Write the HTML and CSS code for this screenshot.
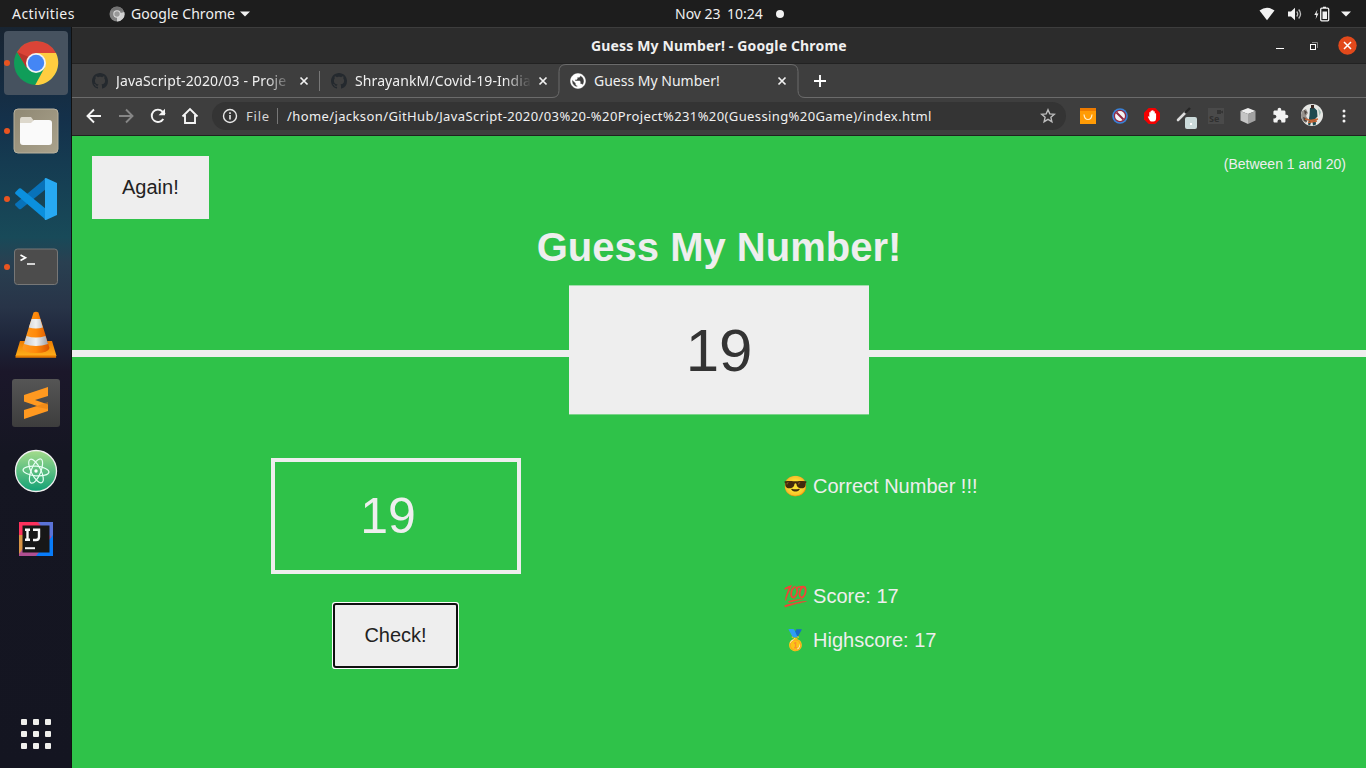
FILE: index.html
```html
<!DOCTYPE html>
<html lang="en">
<head>
<meta charset="utf-8">
<title>Guess My Number!</title>
<link rel="stylesheet" href="styles.css">
</head>
<body>
<svg class="defs" width="0" height="0">
  <defs>
    <symbol id="github" viewBox="0 0 16 16"><path fill="#24292e" d="M8 0C3.58 0 0 3.58 0 8c0 3.54 2.29 6.53 5.47 7.59.4.07.55-.17.55-.38 0-.19-.01-.82-.01-1.49-2.01.37-2.53-.49-2.69-.94-.09-.23-.48-.94-.82-1.13-.28-.15-.68-.52-.01-.53.63-.01 1.08.58 1.23.82.72 1.21 1.87.87 2.33.66.07-.52.28-.87.51-1.07-1.78-.2-3.64-.89-3.64-3.95 0-.87.31-1.59.82-2.15-.08-.2-.36-1.02.08-2.12 0 0 .67-.21 2.2.82.64-.18 1.32-.27 2-.27s1.36.09 2 .27c1.53-1.04 2.2-.82 2.2-.82.44 1.1.16 1.92.08 2.12.51.56.82 1.27.82 2.15 0 3.07-1.87 3.75-3.65 3.95.29.25.54.73.54 1.48 0 1.07-.01 1.93-.01 2.2 0 .21.15.46.55.38A8.01 8.01 0 0 0 16 8c0-4.42-3.58-8-8-8z"/></symbol>
    <symbol id="close" viewBox="0 0 10 10"><path d="M1.500 1.500l7 7M8.500 1.500l-7 7" stroke="#f1f1f1" stroke-width="1.700" fill="none"/></symbol>
    <linearGradient id="cone" x1="0" x2="1"><stop offset="0" stop-color="#ff9a20"/><stop offset=".5" stop-color="#ff8a0a"/><stop offset="1" stop-color="#d95400"/></linearGradient>
    <linearGradient id="coneWhite" x1="0" x2="1"><stop offset="0" stop-color="#c5c8cc"/><stop offset=".5" stop-color="#f0f0f0"/><stop offset="1" stop-color="#a0a3a8"/></linearGradient>
    <linearGradient id="coneBase" x1="0" x2="0" y1="0" y2="1"><stop offset="0" stop-color="#ee7c00"/><stop offset="1" stop-color="#ffb01c"/></linearGradient>
    <linearGradient id="atomFill" x1="0" x2="0" y1="0" y2="1"><stop offset="0" stop-color="#a5dc8c"/><stop offset="1" stop-color="#12a176"/></linearGradient>
    <linearGradient id="sublimeTile" x1="0" x2="0" y1="0" y2="1"><stop offset="0" stop-color="#555"/><stop offset="1" stop-color="#3d3d3d"/></linearGradient>
    <linearGradient id="folderTile" x1="0" x2="1" y1="0" y2="1"><stop offset="0" stop-color="#8f8873"/><stop offset="1" stop-color="#aaa28c"/></linearGradient>
  </defs>
</svg>
<div class="desktop">
  <div class="panel">
    <div class="panel-side">
      <span class="t-activities">Activities</span>
      <svg class="app-icon" width="16" height="16" viewBox="0 0 16 16"><circle cx="8" cy="8" r="7.500" fill="#828282"/><path d="M8 8L15.300 6A7.500 7.500 0 0 1 8 15.500z" fill="#d2d2d2"/><path d="M1.500 4.500A7.500 7.500 0 0 1 14.500 4.500H8z" fill="#727272"/><circle cx="8" cy="8" r="3.700" fill="#ddd"/><circle cx="8" cy="8" r="2.700" fill="#999"/></svg>
      <span class="t-app">Google Chrome</span>
      <svg class="caret" width="10" height="6" viewBox="0 0 10 6"><path d="M0 .5h10L5 5.500z" fill="#f2f2f2"/></svg>
    </div>
    <div class="panel-clock"><span class="t-date">Nov 23</span><span class="t-time">10:24</span><i class="dot"></i></div>
    <div class="panel-status">
      <svg width="16" height="14" viewBox="0 0 16 14"><path d="M.5 3.500Q8-2 15.500 3.500L8 13.200z" fill="#f2f2f2"/></svg>
      <svg width="16" height="14" viewBox="0 0 16 14"><path d="M1 4.500h3L8 .8v12.400L4 9.500H1z" fill="#f2f2f2"/><path d="M9.700 4.500q2 2.500 0 5M11.700 2.500q3.700 4.500 0 9" stroke="#bbb" stroke-width="1.300" fill="none"/></svg>
      <svg width="16" height="16" viewBox="0 0 16 16"><path d="M3.500 3.500L.3 9h2L1.700 13 4.500 7.500h-2z" fill="#f2f2f2"/><path d="M9 2V.7h3V2" fill="#f2f2f2"/><rect x="6.700" y="2.200" width="8" height="12.600" rx="1" fill="none" stroke="#f2f2f2" stroke-width="1.300"/><rect x="8.500" y="5.500" width="4.500" height="7.500" fill="#f2f2f2"/></svg>
      <svg width="10" height="6" viewBox="0 0 10 6"><path d="M0 .5h10L5 5.500z" fill="#f2f2f2"/></svg>
    </div>
  </div>
  <div class="workspace">
    <nav class="dock">
      <div class="dock-item running active"><svg width="48" height="48" viewBox="0 0 48 48"><circle cx="24" cy="24" r="22" fill="#109d59"/><path d="M5 13A22.300 22.300 0 0 1 44 14H24L14.500 28z" fill="#db4437"/><path d="M24 14h20A22.300 22.300 0 0 1 23.200 46L33 28z" fill="#ffcd40"/><path d="M5.500 13l9 16 2-11z" fill="#b9342b"/><circle cx="24" cy="24" r="10" fill="#f3f3f3"/><circle cx="24" cy="24" r="8.200" fill="#4486f5"/></svg></div>
      <div class="dock-item running"><svg width="48" height="48" viewBox="0 0 48 48"><rect x="2" y="2" width="44" height="44" rx="4" fill="url(#folderTile)" stroke="#b8b19e" stroke-width="1"/><path d="M8 13q0-3 2-3h9l3 4h15v5H8z" fill="#ddd8cc"/><path d="M8 16h11l3-3h15q3 0 3 3v19q0 3-3 3H11q-3 0-3-3z" fill="#fafafa"/></svg></div>
      <div class="dock-item running"><svg width="48" height="48" viewBox="0 0 48 48"><path d="M34 3v11L9 34q-1 .6-2 0l-3.500-3.500q-1-1 0-2z" fill="#0872b9"/><path d="M3.500 17L7 13.600q1-.6 2 0L34 34v11L3.500 19q-1-1 0-2z" fill="#0b90de"/><path d="M34 3l11 5v32l-11 5q-2 0-1-2V5q-1-2 1-2z" fill="#27a9f3"/></svg></div>
      <div class="dock-item running"><svg width="48" height="48" viewBox="0 0 48 48"><rect x="2.500" y="6" width="43" height="35.500" rx="3" fill="#4c4c4c" stroke="#777"/><path d="M8.500 12l5 2.800-5 2.800" stroke="#fff" stroke-width="1.700" fill="none"/><path d="M15 21h8" stroke="#fff" stroke-width="1.500"/></svg></div>
      <div class="dock-item"><svg width="48" height="48" viewBox="0 0 48 48"><path d="M8 30h32l4.500 15H3.500z" fill="url(#coneBase)"/><path d="M3.500 44.500h40.600v2.200H3.500z" fill="#e47b00"/><path d="M21.500 1.500Q24 0 26.500 1.500L37.500 37q-1 5-13.500 5T10.500 37z" fill="url(#cone)"/><path d="M19.600 8h8.700l2.500 8.500q-7 2-14 0zM14.500 25q9.500 3 19 0l2.500 8q-12 4-24 0z" fill="url(#coneWhite)"/></svg></div>
      <div class="dock-item"><svg width="48" height="48" viewBox="0 0 48 48"><rect width="48" height="48" rx="3" fill="url(#sublimeTile)"/><path d="M12 16l24-8v9l-13 4 13 4.500V32l-24 8v-9l13-4-13-4.500z" fill="#ff9920"/><path d="M23 27.500l13-4.500V29l-1 1z" fill="#e27d10" opacity=".5"/></svg></div>
      <div class="dock-item"><svg width="48" height="48" viewBox="0 0 48 48"><circle cx="24" cy="24" r="20.500" fill="url(#atomFill)" stroke="#f0f0f0" stroke-width="1.300"/><g fill="none" stroke="#e7fff4" stroke-width="1.200"><ellipse cx="24" cy="24" rx="13" ry="4.800" transform="rotate(5 24 24)"/><ellipse cx="24" cy="24" rx="13" ry="4.800" transform="rotate(63 24 24)"/><ellipse cx="24" cy="24" rx="13" ry="4.800" transform="rotate(112 24 24)"/></g><circle cx="24" cy="24" r="1.700" fill="#fff"/></svg></div>
      <div class="dock-item"><svg width="48" height="48" viewBox="0 0 48 48"><rect x="7" y="7" width="34" height="34" fill="#087cfa"/><path d="M7 7h20l14 14-12 20H7z" fill="#b04f92"/><path d="M7 7h18l6 7-20 8H7z" fill="#fe315d"/><path d="M27 7h14v16l-10-7z" fill="#5b73d8"/><path d="M7 20h5v12l-5 7z" fill="#d99445"/><path d="M41 20v21H24z" fill="#087cfa"/><rect x="10.500" y="10.500" width="27" height="27" fill="#171717"/><path d="M13 14.800h5M15.500 14v11M13 24.800h5M21 14.800h6V22q0 3-3 3h-3" fill="none" stroke="#f8f8f8" stroke-width="2.400"/><path d="M13 33.200h10" stroke="#f8f8f8" stroke-width="2"/></svg></div>
      <div class="apps"><i></i><i></i><i></i><i></i><i></i><i></i><i></i><i></i><i></i></div>
    </nav>
    <section class="window">
      <div class="titlebar">
        <span class="t-title">Guess My Number! - Google Chrome</span>
        <div class="controls"><i class="min"></i>
          <svg width="8" height="8" viewBox="0 0 8 8"><path d="M2 .5h5.500V6" fill="none" stroke="#888"/><rect x=".5" y="2.500" width="5" height="5" fill="none" stroke="#fff"/></svg>
          <svg width="19" height="19" viewBox="0 0 19 19"><circle cx="9.500" cy="9.500" r="9.200" fill="#e2491b"/><path d="M6 6l7 7M13 6l-7 7" stroke="#fff" stroke-width="1.500"/></svg></div>
      </div>
      <div class="tabs">
        <div class="tab one"><svg width="16" height="16"><use href="#github"/></svg><span class="label fade t-tab1">JavaScript-2020/03 - Proje</span><svg width="10" height="10"><use href="#close"/></svg></div>
        <div class="tab two"><svg width="16" height="16"><use href="#github"/></svg><span class="label fade t-tab2">ShrayankM/Covid-19-India</span><svg width="10" height="10"><use href="#close"/></svg></div>
        <div class="tab current"><svg class="edge" width="256" height="35" viewBox="0 0 256 35"><path d="M0 33.500h2q7 0 7-7v-19q0-7 7-7h225q7 0 7 7v19q0 7 7 7h1V35H0z" fill="#3e3e3e" stroke="none"/><path d="M0 33.500h2q7 0 7-7v-19q0-7 7-7h225q7 0 7 7v19q0 7 7 7h1" fill="none" stroke="#6b6b6b"/></svg>
          <svg width="18" height="18" viewBox="0 0 24 24"><path d="M12 2C6.480 2 2 6.480 2 12s4.480 10 10 10 10-4.480 10-10S17.520 2 12 2zm-1 17.930c-3.950-.49-7-3.850-7-7.930 0-.62.08-1.210.21-1.790L9 15v1c0 1.100.9 2 2 2v1.930zm6.900-2.540c-.26-.81-1-1.390-1.900-1.390h-1v-3c0-.55-.45-1-1-1H8v-2h2c.55 0 1-.45 1-1V7h2c1.100 0 2-.9 2-2v-.41c2.930 1.190 5 4.060 5 7.410 0 2.080-.8 3.970-2.100 5.390z" fill="#fff" stroke="#fff" stroke-width=".6"/></svg><span class="label t-tab3">Guess My Number!</span><svg width="10" height="10"><use href="#close"/></svg></div>
        <svg class="plus" width="12" height="12" viewBox="0 0 12 12"><path d="M6 0v12M0 6h12" stroke="#fff" stroke-width="1.900"/></svg>
      </div>
      <div class="toolbar">
        <svg class="nav" width="20" height="20" viewBox="0 0 20 20"><path d="M17 10H4M10 3.500L3.500 10l6.500 6.500" fill="none" stroke="#f5f5f5" stroke-width="1.900"/></svg>
        <svg class="nav" width="20" height="20" viewBox="0 0 20 20"><path d="M3 10h13M10 3.500l6.500 6.500-6.500 6.500" fill="none" stroke="#868686" stroke-width="1.900"/></svg>
        <svg class="nav" width="20" height="20" viewBox="0 0 20 20"><path d="M15.300 13a6.200 6.200 0 1 1-.8-7.400L17 8" fill="none" stroke="#f5f5f5" stroke-width="1.900"/><path d="M17 2.800v6.400h-6.400z" fill="#f5f5f5"/></svg>
        <svg class="nav" width="20" height="20" viewBox="0 0 20 20"><path d="M2.500 10.500L10 3l7.500 7.500M5 9v8h10V9" fill="none" stroke="#f5f5f5" stroke-width="1.900"/></svg>
        <div class="omnibox">
          <svg width="16" height="16" viewBox="0 0 16 16"><circle cx="8" cy="8" r="6.500" fill="none" stroke="#e8e8e8" stroke-width="1.400"/><path d="M8 7v4.500M8 4.300v1.600" stroke="#e8e8e8" stroke-width="1.600"/></svg>
          <span class="t-file">File</span><i class="sep"></i><span class="t-url">/home/jackson/GitHub/JavaScript-2020/03%20-%20Project%231%20(Guessing%20Game)/index.html</span>
          <svg class="star" width="16" height="16" viewBox="0 0 16 16"><path d="M8 1.800l1.800 4.100 4.500.4-3.400 3 1 4.400L8 11.400l-3.900 2.300 1-4.400-3.400-3 4.500-.4z" fill="none" stroke="#bdbdbd" stroke-width="1.400"/></svg>
        </div>
        <div class="extensions">
          <svg width="16" height="16" viewBox="0 0 16 16"><rect width="16" height="16" fill="#ff9b05"/><path d="M0 0h16v3H0z" fill="#ee7b00"/><path d="M4 6.500q.5 5 4 5t4-5" fill="none" stroke="#fff0d0" stroke-width="1.200"/></svg>
          <svg width="16" height="16" viewBox="0 0 16 16"><circle cx="8" cy="8" r="7.800" fill="#3883da"/><circle cx="8" cy="8" r="5.600" fill="#f4f4f4" stroke="#912943" stroke-width="1.300"/><path d="M4.500 4.500l7 7" stroke="#912943" stroke-width="2"/></svg>
          <svg width="16" height="16" viewBox="0 0 16 16"><path d="M4.700 0h6.600L16 4.700v6.600L11.300 16H4.700L0 11.300V4.700z" fill="#f40000"/><path d="M5.500 12L3.800 8.700q.6-1 1.500.2V4.500q.7-.8 1.300 0V3q.7-.8 1.400 0V2.500q.8-.7 1.500 0v1q.7-.7 1.300 0v2q.8-.7 1.300 0V10q0 3.500-2.800 3.500H7.500q-1.300 0-2-1.500z" fill="#fff"/></svg>
          <svg class="picker" width="22" height="24" viewBox="0 0 22 24"><path d="M2 15l7-7" stroke="#ddd" stroke-width="2.600" stroke-linecap="round"/><path d="M9 8l5-5" stroke="#262626" stroke-width="2.400"/><rect x="9" y="12" width="12" height="12" rx="2" fill="#cbdada"/><rect x="14" y="18" width="2" height="2" fill="#fff"/></svg>
          <div class="selenium">Se<svg width="6" height="4" viewBox="0 0 6 4"><path d="M0 0h4v1.500L6 .5v3l-2-1V4H0z" fill="#343434"/></svg></div>
          <svg width="16" height="16" viewBox="0 0 16 16"><path d="M8 0l7.500 3L8 6 .5 3z" fill="#eee"/><path d="M.5 3L8 6v10l-7.500-3.500z" fill="#c5c5c5"/><path d="M8 6l7.500-3v9.500L8 16z" fill="#a2a2a2"/></svg>
          <svg class="puzzle" width="17" height="17" viewBox="0 0 24 24"><path d="M20.500 11H19V7c0-1.100-.9-2-2-2h-4V3.500C13 2.120 11.880 1 10.500 1S8 2.120 8 3.500V5H4c-1.100 0-1.990.9-1.990 2v3.800H3.500c1.490 0 2.700 1.210 2.700 2.700s-1.210 2.700-2.700 2.700H2V20c0 1.100.9 2 2 2h3.800v-1.500c0-1.490 1.210-2.700 2.700-2.700 1.490 0 2.700 1.210 2.700 2.700V22H17c1.100 0 2-.9 2-2v-4h1.500c1.380 0 2.500-1.120 2.500-2.500S21.880 11 20.500 11z" fill="#f3f3f3"/></svg>
          <svg class="avatar" width="22" height="22" viewBox="0 0 22 22"><circle cx="11" cy="11" r="11" fill="#e6e7e4"/><path d="M1 7l4-2 2 4-2 3 2 3-2 4Q0 16 0 11z" fill="#96918b"/><path d="M3 6l3 2-2 3zM2 13l3 1 1 4-3-1z" fill="#4d4540"/><path d="M9 4l4-.5 3 3 .5 6-2 2 .5 6-3 1-1-6-2 6-2-1 1.500-9z" fill="#1d4a50"/><path d="M10 1h3v3.500h-3z" fill="#3b2722"/><path d="M4 15l6 1.500 7-1.500M7 18.500l9-1.500" stroke="#c46231" stroke-width="1.300" fill="none"/><path d="M17 4l3 4-1.500 4z" fill="#a4c1ba"/></svg>
          <svg class="menu" width="4" height="14" viewBox="0 0 4 14"><circle cx="2" cy="2" r="1.500" fill="#f3f3f3"/><circle cx="2" cy="7" r="1.500" fill="#f3f3f3"/><circle cx="2" cy="12" r="1.500" fill="#f3f3f3"/></svg>
        </div>
      </div>
      <div class="page">
        <header>
          <div class="header-row"><button class="btn">Again!</button><p class="between">(Between 1 and 20)</p></div>
          <h1>Guess My Number!</h1>
          <div class="number">19</div>
        </header>
        <main>
          <div class="left"><div class="guess">19</div><button class="btn check">Check!</button></div>
          <div class="right"><p class="message">😎 Correct Number !!!</p><p class="score">💯 Score: 17</p><p class="highscore">🥇 Highscore: 17</p></div>
        </main>
      </div>
    </section>
  </div>
</div>
</body>
</html>
```
FILE: styles.css
```css
* { box-sizing: border-box; margin: 0; padding: 0; }
body { width: 1366px; height: 768px; overflow: hidden; font-family: "Noto Sans", "Open Sans", sans-serif; color: #f0f0f0; }
svg { display: block; flex: none; }
.defs { position: absolute; }
.desktop { height: 768px; display: flex; flex-direction: column; }
.panel { height: 27px; background: #1d1d1d; display: grid; grid-template-columns: 675px 110px 1fr; align-items: center; font-size: 14px; white-space: nowrap; }
.panel-side { display: flex; align-items: center; padding-left: 12px; }
.app-icon { margin-left: 34px; margin-right: 6px; }
.caret { margin-left: 5px; }
.t-activities { width: 63px; letter-spacing: .45px; }
.t-app { width: 104px; letter-spacing: .05px; }
.panel-clock { display: flex; align-items: center; }
.t-date { width: 45px; margin-right: 7px; }
.t-time { width: 37px; }
.dot { width: 8px; height: 8px; border-radius: 50%; background: #f2f2f2; margin-left: 12px; }
.panel-status { display: flex; align-items: center; justify-content: flex-end; gap: 11px; padding-right: 15px; }
.panel-status svg:first-child { margin-right: 1px; }
.workspace { display: flex; flex: 1; min-height: 0; }
.dock { width: 72px; padding: 4px; display: flex; flex-direction: column; gap: 4px; border-right: 1px solid #111; background: linear-gradient(#182431 0, #14314b 95px, #153b51 135px, #184a59 210px, #294051 235px, #283448 280px, #1d2439 315px, #1b172a 345px, #151622 430px, #141521 100%); }
.dock-item { height: 64px; width: 64px; display: grid; place-items: center; position: relative; border-radius: 4px; flex: none; }
.active { background: #46525f; }
.running::before { content: ""; position: absolute; width: 6px; height: 6px; border-radius: 50%; background: #e95420; left: 0; top: 29px; }
.apps { margin: auto 0 15px 17px; display: grid; grid-template-columns: repeat(3, 6px); gap: 6px; }
.apps i { width: 6px; height: 6px; background: #efefec; border-radius: 1px; }
.window { flex: 1; min-width: 0; display: flex; flex-direction: column; }
.titlebar { height: 37px; background: #2c2c2c; border-top: 1px solid #3d3d3d; border-bottom: 1px solid #222; display: grid; grid-template-columns: 519px 1fr auto; align-items: center; font-size: 14px; font-weight: 700; white-space: nowrap; }
.t-title { grid-column: 2; letter-spacing: .15px; }
.controls { display: flex; align-items: center; padding-right: 9px; }
.min { width: 8px; height: 1px; background: #fff; margin: 5px 26px 0 0; }
.controls svg + svg { margin-left: 20px; margin-top: -1px; }
.tabs { height: 34px; background: #3e3e3e; border-bottom: 1px solid #6b6b6b; display: flex; align-items: center; font-size: 14px; }
.tab { display: flex; align-items: center; height: 34px; position: relative; }
.tab > * { position: relative; }
.tab .edge { position: absolute; left: 0; top: 0; }
.one { width: 248px; padding: 0 11px 0 20px; background: linear-gradient(#777, #777) right center / 1px 20px no-repeat; }
.two { width: 230px; padding: 0 2px 0 11px; }
.current { width: 256px; padding: 0 19px 0 19px; }
.label { flex: 1; margin: 0 5px 0 8px; white-space: nowrap; letter-spacing: .1px; }
.t-tab3 { margin-left: 7px; letter-spacing: 0; }
.fade { -webkit-mask-image: linear-gradient(90deg, #000 84%, transparent 99%); mask-image: linear-gradient(90deg, #000 84%, transparent 99%); }
.plus { margin-left: 8px; }
.toolbar { height: 38px; background: #3e3e3e; border-bottom: 1px solid #202020; display: flex; align-items: center; padding: 0 0 2px 12px; }
.nav { margin-right: 12px; }
.omnibox { width: 854px; height: 28px; border-radius: 14px; background: #343434; display: flex; align-items: center; padding: 0 10px; font-size: 13px; white-space: nowrap; }
.t-file { margin-left: 8px; width: 24px; color: #d6d6d6; letter-spacing: .8px; }
.sep { width: 1px; height: 16px; background: #777; margin: 0 9px 0 7px; }
.t-url { letter-spacing: .395px; }
.star { margin-left: auto; }
.extensions { display: flex; align-items: center; margin-left: 14px; gap: 16px; }
.picker { margin: 3px -6px 0 0; }
.selenium { width: 16px; height: 16px; background: #4a4a4a; color: #303030; font: bold 9px/21px "Noto Sans", sans-serif; padding-left: 1px; position: relative; }
.selenium svg { position: absolute; right: 1px; top: 2px; }
.puzzle { margin-right: -4px; }
.avatar { margin-top: -1px; }
.menu { margin-left: 3px; }
.page { flex: 1; min-height: 0; background: #2fc249; color: #eee; font-family: "Liberation Sans", Arial, sans-serif; display: flex; flex-direction: column; }
header { height: 221px; border-bottom: 7px solid #eee; display: flex; flex-direction: column; align-items: center; padding-top: 20px; flex: none; }
.header-row { width: 100%; display: flex; justify-content: space-between; padding: 0 20px; }
.btn { border: 0; background: #eee; color: #222; font: 20px/23px "Liberation Sans", Arial, sans-serif; padding: 20px 30px; }
.between { font-size: 14px; line-height: 16px; }
h1 { font-size: 40px; line-height: 46px; margin-top: 5px; }
.number { width: 300px; height: 129px; margin-top: 15px; flex: none; background: #eee; color: #333; font-size: 60px; line-height: 131px; text-align: center; transform: translateY(.4px); }
main { flex: 1; display: grid; grid-template-columns: 647px 1fr; padding-top: 101px; }
.left { display: flex; flex-direction: column; align-items: center; }
.guess { width: 250px; height: 116px; border: 4px solid #eee; font-size: 50px; line-height: 108px; text-align: center; padding-right: 15px; }
.check { margin-top: 31px; padding: 19px 29px; outline: 2px solid #101010; outline-offset: 0; border-radius: 1px; box-shadow: 0 0 0 3px #fff; }
.right { padding: 17px 0 0 63.500px; font-size: 20px; line-height: 23px; }
.score { margin-top: 87px; }
.highscore { margin-top: 21px; }
```
